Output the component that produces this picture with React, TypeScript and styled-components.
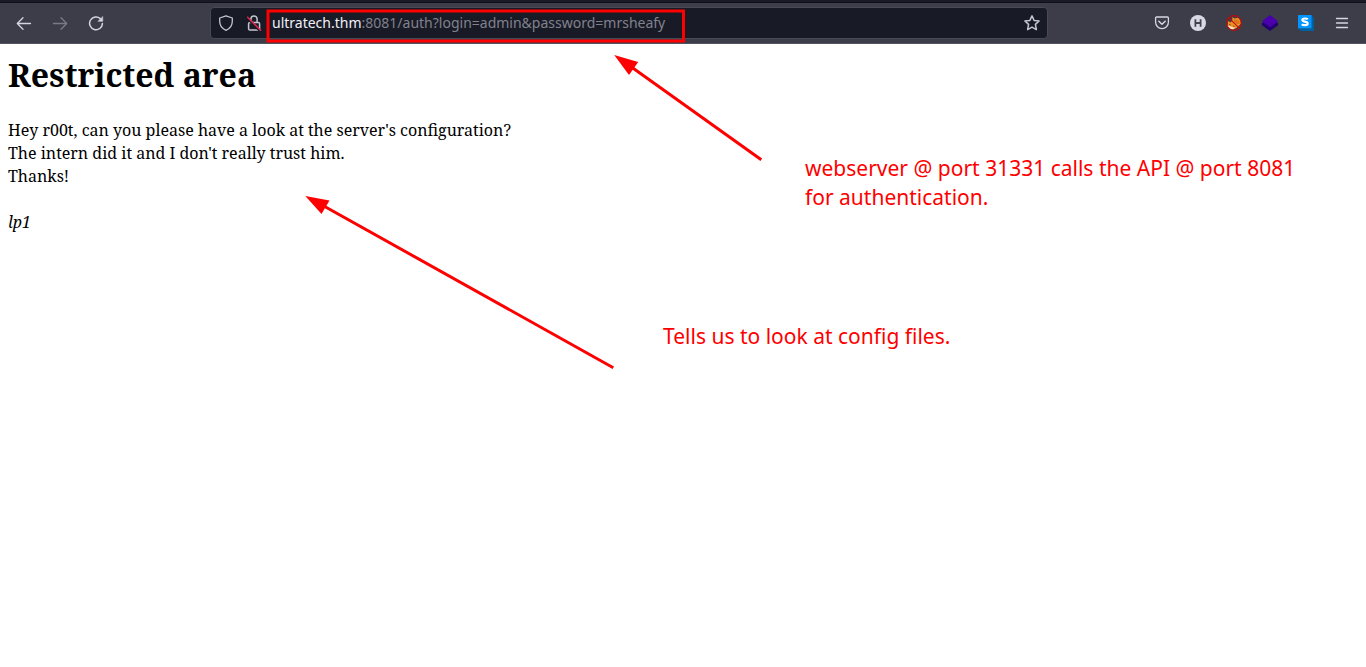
import React from "react";
import styled, { createGlobalStyle } from "styled-components";

const GlobalStyle = createGlobalStyle`
  * { box-sizing: border-box; }
  html, body { margin: 0; padding: 0; background: #fff; }
  body { overflow: hidden; }
`;

const Window = styled.div`
  position: relative;
  display: flex;
  flex-direction: column;
  width: 1366px;
  height: 667px;
  overflow: hidden;
  background: #fff;
`;

const Toolbar = styled.header`
  display: flex;
  align-items: center;
  flex: none;
  height: 44px;
  padding: 3px 12px 0;
  background: #3c3d49;
  border-bottom: 1px solid #52535f;
  box-shadow: inset 0 2px 0 #181a26, inset 0 3px 0 #0e0f18;
`;

const ButtonGroup = styled.nav<{ $width: number; $end?: boolean }>`
  display: flex;
  gap: 12px;
  width: ${(p) => p.$width}px;
  justify-content: ${(p) => (p.$end ? "flex-end" : "flex-start")};
`;

const ToolButton = styled.button<{ $dim?: boolean }>`
  display: flex;
  align-items: center;
  justify-content: center;
  width: 24px;
  height: 24px;
  padding: 0;
  border: 0;
  background: none;
  color: #d3d7e2;
  opacity: ${(p) => (p.$dim ? 0.4 : 1)};
  svg { display: block; }
`;

const AddressBar = styled.div`
  display: flex;
  align-items: center;
  width: 838px;
  height: 32px;
  padding: 0 7px;
  background: #181a26;
  border: 1px solid #474955;
  border-radius: 4px;
  color: #c3c6d1;
  svg { display: block; flex: none; }
`;

const SiteIcons = styled.div`
  display: flex;
  gap: 12px;
  width: 54px;
`;

const Url = styled.div`
  flex: 1;
  color: #80828e;
  font: 14px/20px "Noto Sans", sans-serif;
  white-space: nowrap;
`;

const Host = styled.span`
  color: #f0f1f8;
`;

const Page = styled.main`
  flex: 1;
  padding: 9px 8px 0;
  color: #000;
  font: 16px/23px "Noto Serif", "Liberation Serif", serif;
`;

const Title = styled.h1`
  margin: 0 0 22px;
  font-size: 32px;
  line-height: 44px;
  font-weight: 700;
`;

const Line = styled.p`
  margin: 0;
  min-height: 23px;
`;

const Markup = styled.svg`
  position: absolute;
  inset: 0;
  pointer-events: none;
`;

const Note = styled.p<{ $x: number; $y: number }>`
  position: absolute;
  left: ${(p) => p.$x}px;
  top: ${(p) => p.$y}px;
  margin: 0;
  color: #fe0000;
  font: 21px/29px "Noto Sans", sans-serif;
  white-space: nowrap;
`;

const Glyph = ({ children }: { children: React.ReactNode }) => (
  <svg width="16" height="16" viewBox="0 0 16 16" fill="none" stroke="currentColor" strokeWidth="1.3" strokeLinecap="round" strokeLinejoin="round">
    {children}
  </svg>
);

export default function App() {
  return (
    <>
      <GlobalStyle />
      <Window>
        <Toolbar>
          <ButtonGroup $width={198}>
            <ToolButton aria-label="Back">
              <Glyph><path d="M14.5 8.5H1.5M7 2.8L1.3 8.5L7 14.2" /></Glyph>
            </ToolButton>
            <ToolButton aria-label="Forward" $dim>
              <Glyph><path d="M1.5 8.5H14.5M9 2.8L14.7 8.5L9 14.2" /></Glyph>
            </ToolButton>
            <ToolButton aria-label="Reload">
              <Glyph>
                <path d="M12.3 3.6A6.4 6.4 0 1 0 14.4 8.6" strokeWidth="1.5" />
                <path d="M14.7 1.9V6.3H10.3Z" fill="currentColor" strokeWidth="0.6" />
              </Glyph>
            </ToolButton>
          </ButtonGroup>
          <AddressBar>
            <SiteIcons>
              <Glyph><path d="M8 .8L14.3 3V6.3C14.3 10.4 11.8 13.7 8 15.3C4.2 13.7 1.7 10.4 1.7 6.3V3Z" /></Glyph>
              <Glyph>
                <path d="M4.9 7V4A3.1 3.1 0 0 1 11.1 4V7" strokeWidth="1.5" />
                <rect x="2.6" y="7.5" width="11" height="7.6" rx="1.3" strokeWidth="1.5" />
                <path d="M1.4 4L13 15.4" stroke="#181a26" strokeWidth="1.6" />
                <path d="M1.6 2.2L14.6 15.2" stroke="#e22850" strokeWidth="1.5" />
              </Glyph>
            </SiteIcons>
            <Url><Host>ultratech.thm</Host>:8081/auth?login=admin&amp;password=mrsheafy</Url>
            <Glyph><path d="M8 .9L10.1 5.4L15.1 6L11.4 9.4L12.4 14.6L8 12.1L3.6 14.6L4.6 9.4L.9 6L5.9 5.4Z" strokeWidth="1.5" /></Glyph>
          </AddressBar>
          <ButtonGroup $width={306} $end>
            <ToolButton aria-label="Pocket">
              <Glyph>
                <path d="M2.6 2H13.4Q14.4 2 14.4 3V7.2A6.4 6.4 0 0 1 1.6 7.2V3Q1.6 2 2.6 2Z" />
                <path d="M4.8 6.2L8 9.3L11.2 6.2" strokeWidth="1.5" />
              </Glyph>
            </ToolButton>
            <ToolButton aria-label="Extension H">
              <svg width="16" height="16" viewBox="0 0 16 16">
                <circle cx="8" cy="8" r="8" fill="#d7dae5" />
                <path d="M5.4 4.3V11.8M10.6 4.3V11.8M5.4 8H10.6" stroke="#41424e" strokeWidth="1.8" />
              </svg>
            </ToolButton>
            <ToolButton aria-label="Proxy switch">
              <svg width="16" height="16" viewBox="0 0 16 16">
                <path d="M1.6 10.5L2.2 6L4.6 7.6L6.4 5.4L6.2 2.2L8.6 3.6L12 2.8L14.6 5.4L14.8 8.6L12.6 11.2L10.4 13L7 14.6L3.6 13.6Z" fill="#ee9226" />
                <path d="M1.6 10.4L4.4 11.2L7.4 12.6L9.4 12.2L7 14.6L3.6 13.8Z" fill="#f4e2cc" />
                <path d="M7.4 4.4L11 4.6L13.8 6.6L13.4 9L10.6 9.2L8.4 7.4Z" fill="#d9761a" />
                <path d="M3.4 9.4L4.6 10M7.4 11L8.4 11.4" stroke="#552010" strokeWidth="1" />
                <circle cx="8" cy="8" r="7.4" fill="none" stroke="#c80808" strokeWidth="1.1" />
                <path d="M2.8 2.8L13.2 13.2" stroke="#c80808" strokeWidth="1.1" />
              </svg>
            </ToolButton>
            <ToolButton aria-label="Technology profiler">
              <svg width="16" height="16" viewBox="0 0 16 16">
                <path d="M0 8L8 4L16 8V10.2L8 16L0 10.2Z" fill="#220070" />
                <path d="M8 0L16 6.2L8 12.2L0 6.2Z" fill="#4a00ad" />
              </svg>
            </ToolButton>
            <ToolButton aria-label="Extension S">
              <svg width="16" height="16" viewBox="0 0 16 16">
                <path d="M0 13L2.5 16H16V3L13 0Z" fill="#00609e" />
                <rect width="13.5" height="13.3" fill="#0294ff" />
                <path d="M9.8 4.3C8.8 3.3 4.3 2.8 4.3 5.1C4.3 7.2 9.7 6 9.7 8.5C9.7 10.8 5 10.4 3.8 9.2" fill="none" stroke="#fff" strokeWidth="2.1" />
              </svg>
            </ToolButton>
            <ToolButton aria-label="Menu">
              <Glyph><path d="M2.5 3.5H13.5M2.5 8H13.5M2.5 12.5H13.5" strokeWidth="1.3" /></Glyph>
            </ToolButton>
          </ButtonGroup>
        </Toolbar>
        <Page>
          <Title>Restricted area</Title>
          <Line>Hey r00t, can you please have a look at the server's configuration?</Line>
          <Line>The intern did it and I don't really trust him.</Line>
          <Line>Thanks!</Line>
          <Line />
          <Line><em>lp1</em></Line>
        </Page>
        <Markup width="1366" height="667" viewBox="0 0 1366 667">
          <rect x="268" y="11" width="415.5" height="30" fill="none" stroke="#fe0000" strokeWidth="3" />
          <g stroke="#fe0000" strokeWidth="3" fill="#fe0000">
            <path d="M761.3 159.7L630 66" />
            <path d="M614.2 55L638.2 62L629 75Z" stroke="none" />
            <path d="M613.3 367.7L322 205" />
            <path d="M305.3 196L329.5 200.5L321.5 214Z" stroke="none" />
          </g>
        </Markup>
        <Note $x={805} $y={154}>webserver @ port 31331 calls the API @ port 8081<br />for authentication.</Note>
        <Note $x={663} $y={322}>Tells us to look at config files.</Note>
      </Window>
    </>
  );
}
